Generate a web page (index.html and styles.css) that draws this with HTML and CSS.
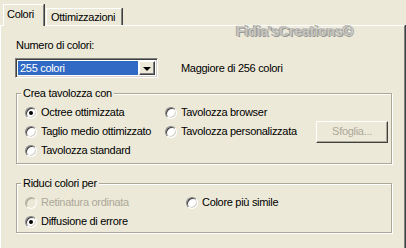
FILE: index.html
```html
<!DOCTYPE html>
<html lang="it">
<head>
    <meta charset="UTF-8">
    <title>Colori</title>
    <link rel="stylesheet" href="styles.css">
</head>
<body>
    <div class="dialog">
        <div class="tabs">
            <div class="tab active">Colori</div>
            <div class="tab">Ottimizzazioni</div>
        </div>

        <div class="panel">
            <div class="watermark">Fidia'sCreations©</div>

            <div class="field-label">Numero di colori:</div>
            <div class="count-row">
                <div class="combo">
                    <span class="combo-value">255 colori</span>
                    <span class="combo-btn"><i class="arrow"></i></span>
                </div>
                <span class="hint">Maggiore di 256 colori</span>
            </div>

            <fieldset class="group">
                <legend>Crea tavolozza con</legend>
                <div class="options palette">
                    <label class="opt"><span class="radio checked"></span>Octree ottimizzata</label>
                    <label class="opt"><span class="radio"></span>Tavolozza browser</label>
                    <span></span>
                    <label class="opt"><span class="radio"></span>Taglio medio ottimizzato</label>
                    <label class="opt"><span class="radio"></span>Tavolozza personalizzata</label>
                    <button class="browse" disabled>Sfoglia...</button>
                    <label class="opt"><span class="radio"></span>Tavolozza standard</label>
                </div>
            </fieldset>

            <fieldset class="group reduce">
                <legend>Riduci colori per</legend>
                <div class="options dither">
                    <label class="opt disabled"><span class="radio"></span>Retinatura ordinata</label>
                    <label class="opt"><span class="radio"></span>Colore più simile</label>
                    <label class="opt"><span class="radio checked"></span>Diffusione di errore</label>
                </div>
            </fieldset>
        </div>
    </div>
</body>
</html>
```

FILE: styles.css
```css
body {
    margin: 0;
    background: #ece9d8;
    font-family: 'Liberation Sans', Arial, sans-serif;
    font-size: 11px;
    line-height: 13px;
    letter-spacing: -0.3px;
    color: #000;
    width: 406px;
    height: 248px;
    overflow: hidden;
}

.dialog {
    position: relative;
}

/* tab strip */
.tabs {
    display: flex;
    align-items: flex-end;
    height: 25px;
    padding-left: 3px;
}

.tab {
    position: relative;
    height: 17px;
    box-sizing: border-box;
    padding: 2px 6px 0 4px;
    border-left: 1px solid #fff;
    border-top: 1px solid #fff;
    border-right: 1px solid #808080;
    box-shadow: 1px 0 0 #404040;
    margin-right: 2px;
}

.tab.active {
    height: 22px;
    width: 41px;
    margin-bottom: -1px;
    padding: 3px 0 0 3px;
    background: #ece9d8;
    z-index: 1;
}

/* page body */
.panel {
    position: relative;
    width: 405px;
    box-sizing: border-box;
    height: 223px;
    border-top: 1px solid #fff;
    border-left: 1px solid #fff;
    border-right: 1px solid #808080;
    box-shadow: 1px 0 0 #404040;
    padding: 13px 13px 0 15px;
}

.watermark {
    position: absolute;
    top: -2px;
    left: 235px;
    font-weight: bold;
    font-size: 14px;
    line-height: 14px;
    letter-spacing: -0.1px;
    color: #c6c5bf;
    text-shadow: 1px 1px 0 #9a9994, -1px 0 0 #a8a7a2, 0 -1px 0 #f6f5ef;
}

.field-label {
    height: 13px;
}

.count-row {
    display: flex;
    align-items: center;
    gap: 23px;
    margin-top: 6px;
    margin-left: -1px;
}

.combo {
    display: flex;
    width: 143px;
    height: 20px;
    box-sizing: border-box;
    padding: 2px;
    border: 1px solid;
    border-color: #808080 #fff #fff #808080;
    box-shadow: inset 1px 1px 0 #404040, inset -1px -1px 0 #d4d0c8;
    background: #fff;
}

.combo-value {
    flex: 1;
    background: #316ac5;
    color: #fff;
    padding-left: 2px;
    line-height: 14px;
    margin-right: 1px;
}

.combo-btn {
    width: 16px;
    box-sizing: border-box;
    background: #ece9d8;
    border: 1px solid;
    border-color: #fff #404040 #404040 #fff;
    box-shadow: inset -1px -1px 0 #808080;
    display: flex;
    align-items: center;
    justify-content: center;
}

.arrow {
    width: 0;
    height: 0;
    border-left: 4px solid transparent;
    border-right: 4px solid transparent;
    border-top: 4px solid #000;
    margin-top: 1px;
}

/* group boxes */
.group {
    margin: 9px 0 0 0;
    padding: 0;
    width: 376px;
    box-sizing: border-box;
    border: 1px solid #aca899;
    box-shadow: inset 1px 1px 0 #fff, 1px 1px 0 #fff;
}

.group legend {
    margin-left: 4px;
    padding: 0 2px;
    background: #ece9d8;
    line-height: 13px;
}

.group.reduce {
    margin-top: 13px;
}

.options {
    display: grid;
    grid-auto-rows: 19px;
    padding: 3px 0 3px 8px;
}

.palette {
    grid-template-columns: 140px 151px 72px;
}

.dither {
    grid-template-columns: 161px 1fr;
    padding-bottom: 1px;
}

.opt {
    display: flex;
    align-items: center;
    white-space: nowrap;
}

.radio {
    width: 12px;
    height: 12px;
    box-sizing: border-box;
    border-radius: 50%;
    border: 1px solid;
    border-color: #848284 #fff #fff #848284;
    box-shadow: inset 1px 1px 0 #404040, inset -1px -1px 0 #d4d0c8;
    background: #fff;
    margin-right: 4px;
    display: flex;
    align-items: center;
    justify-content: center;
    flex: none;
}

.radio.checked::after {
    content: "";
    width: 4px;
    height: 4px;
    border-radius: 50%;
    background: #000;
}

.opt.disabled {
    color: #aca899;
}

.opt.disabled .radio {
    background: #ece9d8;
    border-color: #b8b4a8 #fff #fff #b8b4a8;
    box-shadow: inset 1px 1px 0 #aca899;
}

.browse {
    align-self: center;
    height: 22px;
    width: 72px;
    margin: 0;
    padding: 0;
    font: inherit;
    letter-spacing: inherit;
    color: #aca899;
    background: #ece9d8;
    border: 1px solid;
    border-color: #fff #404040 #404040 #fff;
    box-shadow: inset -1px -1px 0 #aca899;
}
```
